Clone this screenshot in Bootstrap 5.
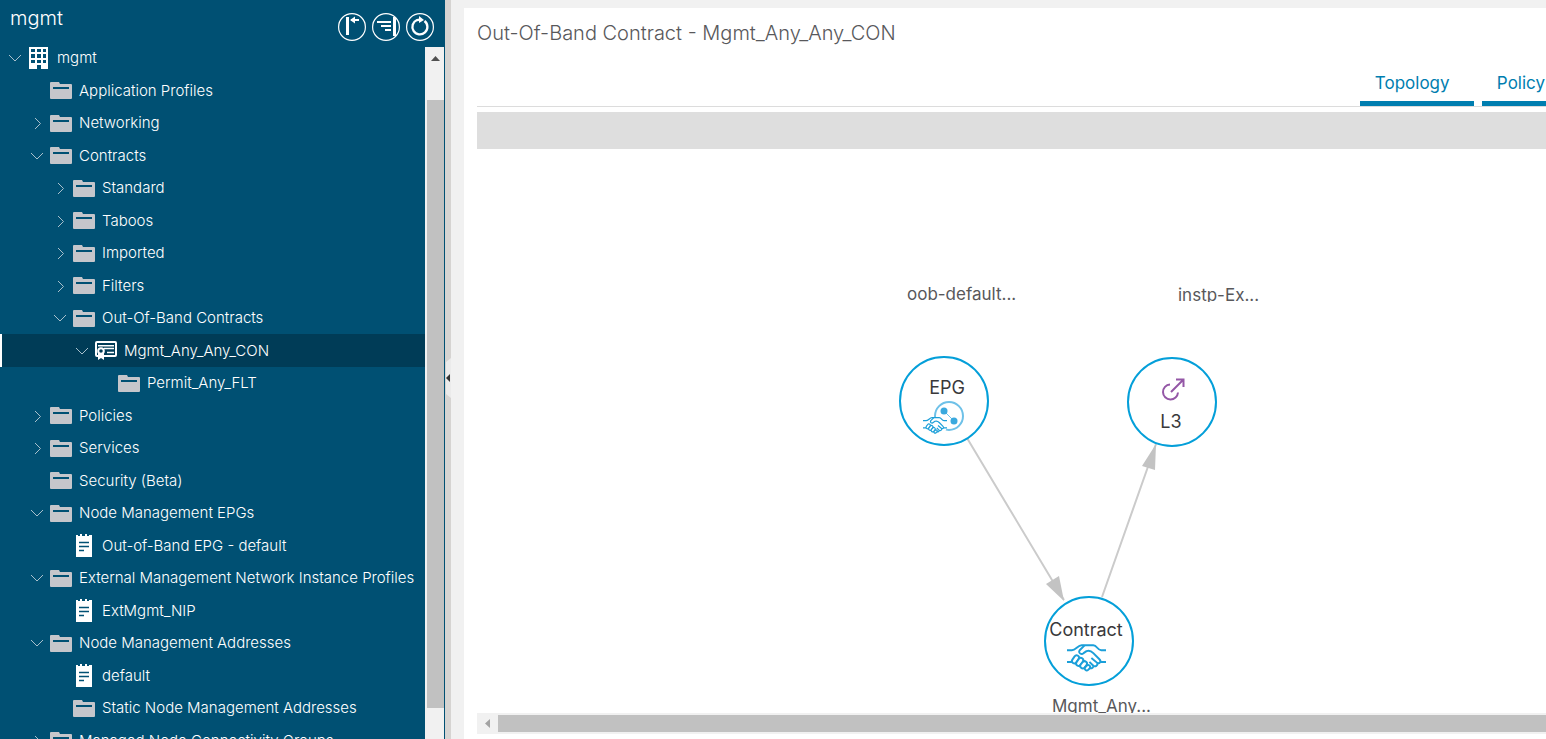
<!DOCTYPE html>
<html lang="en">
<head>
<meta charset="utf-8">
<meta name="viewport" content="width=device-width, initial-scale=1">
<title>mgmt - Out-Of-Band Contract</title>
<link rel="stylesheet" href="https://cdn.jsdelivr.net/npm/bootstrap@5.3.0/dist/css/bootstrap.min.css">
<style>
  body { font-family: Inter, "Liberation Sans", sans-serif; background: #f1f1f1; color: #58585b; }
  button { font: inherit; }
  .side { width: 445px; background: #005073; color: #fff; }
  .side-head { height: 42px; padding: 0 11px 0 10px; }
  .side-title { font-size: 20px; line-height: 24px; padding-top: 6px; font-weight: 300; }
  .tools { padding-top: 13px; gap: 6px; }
  .round-btn { width: 28px; height: 28px; }
  .round-btn svg, .twist svg, .ico svg { display: block; }
  .tree { font-size: 15px; line-height: 20px; font-weight: 300; }
  .tree li { height: 32px; padding-left: 8px; white-space: nowrap; }
  .tree li:nth-child(even) { height: 33px; }
  .tree .lv1 { padding-left: 30px; }
  .tree .lv2 { padding-left: 53px; }
  .tree .lv3 { padding-left: 75px; }
  .tree .lv4 { padding-left: 98px; }
  .tree .selected { background: #003c57; box-shadow: inset 2px 0 #fff; }
  .tree a { color: #fff; text-decoration: none; }
  .twist { width: 14px; height: 14px; margin-right: 6px; }
  .ico { width: 22px; margin-right: 7px; }
  .vbar { width: 19px; margin: 5px 1px 0 0; background: #f1f1f1; }
  .vbar-up { height: 53px; padding: 9px 0 0 2px; }
  .vbar-thumb { width: 17px; background: #c1c1c1; flex: 1 1 auto; margin-bottom: 31px; }
  .splitter { width: 6px; background: #d6d4d2; }
  .grip { width: 5px; height: 40px; margin-top: 16px; }
  .main { padding: 8px 0 0 13px; }
  .panel { padding-left: 13px; }
  .page-title { font-size: 20px; line-height: 24px; padding-top: 13px; font-weight: 300; margin: 0; }
  .tabs { border-bottom: 1px solid #dcdcdc; margin-top: 20px; height: 42px; gap: 8px; }
  .tab-link { color: #007eb0; border-bottom: 5px solid #007eb0; font-size: 17px; line-height: 24px; padding: 6px 1px 0 15px; text-decoration: none; }
  .tab-link.active { width: 114px; }
  .strip { height: 37px; margin-top: 5px; background: #dedede; }
  .canvas { min-height: 0; }
  .canvas svg { display: block; }
  .hbar { height: 21px; margin-bottom: 5px; background: #f1f1f1; }
  .hbar-left { width: 21px; }
  .hbar-thumb { height: 17px; background: #c1c1c1; }
  .node-ring { fill: #fff; stroke: #049fd9; stroke-width: 2; }
  .node-name { font-size: 18px; fill: #39393b; }
  .node-label { font-size: 17px; fill: #58585b; }
</style>
</head>
<body>
<svg class="d-none" aria-hidden="true">
  <symbol id="folder" viewBox="0 0 22 17"><path fill="#c5c6cb" d="M0 1q0-1 1-1h8l1 2h11q1 0 1 1v13q0 1-1 1H1q-1 0-1-1z"/><path fill="#005073" d="M3 5h16v2H3z"/></symbol>
  <symbol id="down" viewBox="0 0 14 14"><path fill="none" stroke="#a9c0cc" d="M1 4l6 6 6-6"/></symbol>
  <symbol id="right" viewBox="0 0 14 14"><path fill="none" stroke="#a9c0cc" d="M5 2l5.500 5.500L5 13"/></symbol>
  <symbol id="doc" viewBox="0 0 22 23"><path fill="#fff" d="M3 1h2v1h2V0h2v2h3V0h2v2h2V1h3v22H3z"/><path stroke="#005073" stroke-width="1.500" d="M6 8.500h10M6 12.500h10M6 16.500h5"/></symbol>
  <symbol id="building" viewBox="0 0 22 22"><path fill="#fff" d="M1 0h19v22h-7v-4H9v4H1z"/><path fill="#005073" d="M3 2h4v3H3zM9 2h4v3H9zM15 2h3v3h-3zM3 7h4v4H3zM9 7h4v4H9zM15 7h3v4h-3zM3 13h4v3H3zM9 13h4v3H9zM15 13h3v3h-3z"/></symbol>
  <symbol id="cert" viewBox="0 0 22 20"><rect x="1" y="1" width="20" height="14" rx="1" fill="none" stroke="#fff" stroke-width="2"/><path stroke="#fff" stroke-width="1.500" d="M3 4.700h16M9 7.500h10M12 11.500h7"/><path fill="#fff" d="M3 11h6v8l-3-2-3 2z"/><circle cx="6" cy="10" r="2.800" fill="#003c57" stroke="#fff" stroke-width="2"/></symbol>
  <symbol id="shake" viewBox="0 0 40 28"><g fill="none" stroke="#1b9fd9" stroke-width="2" stroke-linejoin="round">
    <path d="M0 6h5c4 0 6-5 10-5h12c4 0 4 5 8 5h5"/>
    <path d="M18 1l-5 5c-2 3 2 5 4 3l3-2c3-1 5 0 7 2l6 6c3 3 0 5-2 4l-6-5M31 19c1 3-2 4-4 3l-4-4M27 22c0 3-3 3-4 2l-3-3"/>
    <path d="M0 18h5M40 18h-6"/>
    <g fill="#fff"><rect x="-2.500" y="-4" width="5" height="9" rx="2.500" transform="translate(9 15) rotate(35)"/><rect x="-2.500" y="-4.500" width="5" height="9" rx="2.500" transform="translate(13 18) rotate(35)"/><rect x="-2.500" y="-4" width="5" height="8" rx="2.500" transform="translate(17 21) rotate(40)"/><rect x="-2" y="-3" width="4" height="6" rx="2" transform="translate(21 24) rotate(45)"/></g></g></symbol>
</svg>
<div class="d-flex vh-100 overflow-hidden">
  <aside class="side d-flex flex-column flex-shrink-0">
    <header class="side-head d-flex justify-content-between align-items-start flex-shrink-0">
      <h2 class="side-title m-0">mgmt</h2>
      <div class="tools d-flex">
        <button class="round-btn border-0 bg-transparent p-0" type="button" aria-label="Collapse"><svg width="28" height="28" viewBox="0 0 28 28" fill="none" stroke="#fff"><circle cx="14" cy="14" r="13.400" stroke-width="1.200"/><path stroke-width="3" d="M9.500 4v18"/><path stroke-width="2" d="M13 7h8"/><path fill="#fff" stroke="none" d="M12 7l5-3.500v7z"/></svg></button>
        <button class="round-btn border-0 bg-transparent p-0" type="button" aria-label="Align"><svg width="28" height="28" viewBox="0 0 28 28" fill="none" stroke="#fff"><circle cx="14" cy="14" r="13.400" stroke-width="1.200"/><path stroke-width="3" d="M22.500 4v19"/><path stroke-width="2" d="M5 9h14M9 13h10M13 17h6"/></svg></button>
        <button class="round-btn border-0 bg-transparent p-0" type="button" aria-label="Refresh"><svg width="28" height="28" viewBox="0 0 28 28" fill="none" stroke="#fff"><circle cx="14" cy="14" r="13.400" stroke-width="1.200"/><path stroke-width="2.300" d="M18.500 8a7.500 7.500 0 1 1-7.500-1l4-.5"/><path fill="#fff" stroke="none" d="M13 3l5 4-5 3z"/></svg></button>
      </div>
    </header>
    <div class="d-flex flex-grow-1 overflow-hidden">
      <ul class="tree list-unstyled m-0 flex-grow-1">
        <li class="d-flex align-items-center"><button class="twist border-0 bg-transparent p-0" type="button" aria-label="Collapse"><svg width="14" height="14"><use href="#down"/></svg></button><span class="ico"><svg width="22" height="22"><use href="#building"/></svg></span><a href="#">mgmt</a></li>
        <li class="lv1 d-flex align-items-center"><span class="twist"></span><span class="ico"><svg width="22" height="17"><use href="#folder"/></svg></span><a href="#">Application Profiles</a></li>
        <li class="lv1 d-flex align-items-center"><button class="twist border-0 bg-transparent p-0" type="button" aria-label="Expand"><svg width="14" height="14"><use href="#right"/></svg></button><span class="ico"><svg width="22" height="17"><use href="#folder"/></svg></span><a href="#">Networking</a></li>
        <li class="lv1 d-flex align-items-center"><button class="twist border-0 bg-transparent p-0" type="button" aria-label="Collapse"><svg width="14" height="14"><use href="#down"/></svg></button><span class="ico"><svg width="22" height="17"><use href="#folder"/></svg></span><a href="#">Contracts</a></li>
        <li class="lv2 d-flex align-items-center"><button class="twist border-0 bg-transparent p-0" type="button" aria-label="Expand"><svg width="14" height="14"><use href="#right"/></svg></button><span class="ico"><svg width="22" height="17"><use href="#folder"/></svg></span><a href="#">Standard</a></li>
        <li class="lv2 d-flex align-items-center"><button class="twist border-0 bg-transparent p-0" type="button" aria-label="Expand"><svg width="14" height="14"><use href="#right"/></svg></button><span class="ico"><svg width="22" height="17"><use href="#folder"/></svg></span><a href="#">Taboos</a></li>
        <li class="lv2 d-flex align-items-center"><button class="twist border-0 bg-transparent p-0" type="button" aria-label="Expand"><svg width="14" height="14"><use href="#right"/></svg></button><span class="ico"><svg width="22" height="17"><use href="#folder"/></svg></span><a href="#">Imported</a></li>
        <li class="lv2 d-flex align-items-center"><button class="twist border-0 bg-transparent p-0" type="button" aria-label="Expand"><svg width="14" height="14"><use href="#right"/></svg></button><span class="ico"><svg width="22" height="17"><use href="#folder"/></svg></span><a href="#">Filters</a></li>
        <li class="lv2 d-flex align-items-center"><button class="twist border-0 bg-transparent p-0" type="button" aria-label="Collapse"><svg width="14" height="14"><use href="#down"/></svg></button><span class="ico"><svg width="22" height="17"><use href="#folder"/></svg></span><a href="#">Out-Of-Band Contracts</a></li>
        <li class="lv3 selected d-flex align-items-center"><button class="twist border-0 bg-transparent p-0" type="button" aria-label="Collapse"><svg width="14" height="14"><use href="#down"/></svg></button><span class="ico"><svg width="22" height="20"><use href="#cert"/></svg></span><a href="#" aria-current="page">Mgmt_Any_Any_CON</a></li>
        <li class="lv4 d-flex align-items-center"><span class="twist"></span><span class="ico"><svg width="22" height="17"><use href="#folder"/></svg></span><a href="#">Permit_Any_FLT</a></li>
        <li class="lv1 d-flex align-items-center"><button class="twist border-0 bg-transparent p-0" type="button" aria-label="Expand"><svg width="14" height="14"><use href="#right"/></svg></button><span class="ico"><svg width="22" height="17"><use href="#folder"/></svg></span><a href="#">Policies</a></li>
        <li class="lv1 d-flex align-items-center"><button class="twist border-0 bg-transparent p-0" type="button" aria-label="Expand"><svg width="14" height="14"><use href="#right"/></svg></button><span class="ico"><svg width="22" height="17"><use href="#folder"/></svg></span><a href="#">Services</a></li>
        <li class="lv1 d-flex align-items-center"><span class="twist"></span><span class="ico"><svg width="22" height="17"><use href="#folder"/></svg></span><a href="#">Security (Beta)</a></li>
        <li class="lv1 d-flex align-items-center"><button class="twist border-0 bg-transparent p-0" type="button" aria-label="Collapse"><svg width="14" height="14"><use href="#down"/></svg></button><span class="ico"><svg width="22" height="17"><use href="#folder"/></svg></span><a href="#">Node Management EPGs</a></li>
        <li class="lv2 d-flex align-items-center"><span class="twist"></span><span class="ico"><svg width="22" height="23"><use href="#doc"/></svg></span><a href="#">Out-of-Band EPG - default</a></li>
        <li class="lv1 d-flex align-items-center"><button class="twist border-0 bg-transparent p-0" type="button" aria-label="Collapse"><svg width="14" height="14"><use href="#down"/></svg></button><span class="ico"><svg width="22" height="17"><use href="#folder"/></svg></span><a href="#">External Management Network Instance Profiles</a></li>
        <li class="lv2 d-flex align-items-center"><span class="twist"></span><span class="ico"><svg width="22" height="23"><use href="#doc"/></svg></span><a href="#">ExtMgmt_NIP</a></li>
        <li class="lv1 d-flex align-items-center"><button class="twist border-0 bg-transparent p-0" type="button" aria-label="Collapse"><svg width="14" height="14"><use href="#down"/></svg></button><span class="ico"><svg width="22" height="17"><use href="#folder"/></svg></span><a href="#">Node Management Addresses</a></li>
        <li class="lv2 d-flex align-items-center"><span class="twist"></span><span class="ico"><svg width="22" height="23"><use href="#doc"/></svg></span><a href="#">default</a></li>
        <li class="lv2 d-flex align-items-center"><span class="twist"></span><span class="ico"><svg width="22" height="17"><use href="#folder"/></svg></span><a href="#">Static Node Management Addresses</a></li>
        <li class="lv1 d-flex align-items-center"><button class="twist border-0 bg-transparent p-0" type="button" aria-label="Expand"><svg width="14" height="14"><use href="#right"/></svg></button><span class="ico"><svg width="22" height="17"><use href="#folder"/></svg></span><a href="#">Managed Node Connectivity Groups</a></li>
      </ul>
      <div class="vbar d-flex flex-column align-items-end flex-shrink-0">
        <div class="vbar-up w-100"><svg class="d-block mx-auto" width="9" height="5"><path fill="#505050" d="M0 5l4.500-5L9 5z"/></svg></div>
        <div class="vbar-thumb"></div>
      </div>
    </div>
  </aside>
  <div class="splitter d-flex align-items-center justify-content-end flex-shrink-0"><svg class="grip" viewBox="0 0 5 40"><path fill="#ebebeb" d="M0 4l5-4v40l-5-4z"/><path fill="#333" d="M0 20l4-4v8z"/></svg></div>
  <main class="main flex-grow-1 d-flex overflow-hidden">
    <section class="panel bg-white flex-grow-1 d-flex flex-column overflow-hidden">
      <h1 class="page-title">Out-Of-Band Contract - Mgmt_Any_Any_CON</h1>
      <nav class="tabs d-flex justify-content-end flex-shrink-0">
        <a class="tab-link active" href="#">Topology</a>
        <a class="tab-link" href="#">Policy</a>
      </nav>
      <div class="strip flex-shrink-0"></div>
      <div class="canvas flex-grow-1 overflow-hidden">
        <svg width="1200" height="620" role="img" aria-label="Contract topology">
          <defs><clipPath id="labelClip"><rect x="690" y="130" width="110" height="23"/></clipPath></defs>
          <g stroke="#cbcbcb" stroke-width="2"><path d="M490 289L587 451M625 448L679 295"/></g>
          <path fill="#c3c3c3" d="M587 452l-18-17 13-8zM679 295l-14 22 13 4z"/>
          <circle class="node-ring" cx="467" cy="252" r="44"/>
          <circle class="node-ring" cx="695" cy="253" r="44"/>
          <circle class="node-ring" cx="612" cy="492" r="44"/>
          <text class="node-label" x="430" y="151">oob-default...</text>
          <text class="node-label" x="701" y="152" clip-path="url(#labelClip)">instp-Ex...</text>
          <text class="node-label" x="575" y="563">Mgmt_Any...</text>
          <text class="node-name" x="470" y="245" text-anchor="middle">EPG</text>
          <text class="node-name" x="694" y="279" text-anchor="middle">L3</text>
          <text class="node-name" x="609" y="487" text-anchor="middle">Contract</text>
          <circle cx="472" cy="267" r="14" fill="none" stroke="#6ec1e8" stroke-width="2"/>
          <path stroke="#6ec1e8" d="M467 262l10 10"/>
          <circle cx="467" cy="262" r="3.500" fill="#3aa9de"/><circle cx="477" cy="272" r="3.500" fill="#3aa9de"/>
          <path fill="#fff" d="M448 269h15l8 7-3 7h-20z"/>
          <use href="#shake" x="446" y="268" width="24" height="17"/>
          <use href="#shake" x="590" y="495" width="39" height="28"/>
          <g fill="none" stroke="#9457a6" stroke-width="2"><path d="M693 235.500a7.500 7.500 0 1 0 8 8M694 243l12-12M699 230.500h7.500v7.500"/></g>
        </svg>
      </div>
      <div class="hbar d-flex align-items-center flex-shrink-0">
        <div class="hbar-left"><svg class="d-block mx-auto" width="5" height="9"><path fill="#a3a3a3" d="M5 0v9L0 4.500z"/></svg></div>
        <div class="hbar-thumb flex-grow-1"></div>
      </div>
    </section>
  </main>
</div>
<script src="https://cdn.jsdelivr.net/npm/bootstrap@5.3.0/dist/js/bootstrap.bundle.min.js"></script>
</body>
</html>
